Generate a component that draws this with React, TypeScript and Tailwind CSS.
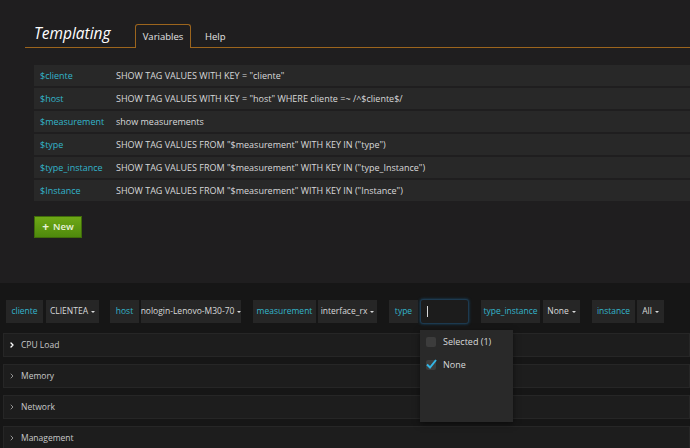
import { ChevronRight } from 'lucide-react';

const variables = [
  { name: '$cliente', query: 'SHOW TAG VALUES WITH KEY = "cliente"' },
  { name: '$host', query: 'SHOW TAG VALUES WITH KEY = "host" WHERE cliente =~ /^$cliente$/' },
  { name: '$measurement', query: 'show measurements' },
  { name: '$type', query: 'SHOW TAG VALUES FROM "$measurement" WITH KEY IN ("type")' },
  { name: '$type_instance', query: 'SHOW TAG VALUES FROM "$measurement" WITH KEY IN ("type_Instance")' },
  { name: '$Instance', query: 'SHOW TAG VALUES FROM "$measurement" WITH KEY IN ("Instance")' },
];

const rows = ['CPU Load', 'Memory', 'Network', 'Management'];

function Caret() {
  return <span className="ml-[3px] inline-block border-x-[2px] border-t-[2.5px] border-x-transparent border-t-[#d8d9da] align-middle" />;
}

function Label({ text, w }: { text: string; w: string }) {
  return (
    <div className={`${w} h-[23px] flex items-center justify-center bg-[#262626] text-[#33b5cb] whitespace-nowrap`}>{text}</div>
  );
}

function Value({ text, w }: { text: string; w: string }) {
  return (
    <div className={`${w} h-[23px] flex items-center justify-center bg-[#262626] text-[#d8d9da] whitespace-nowrap`}>
      {text}
      <Caret />
    </div>
  );
}

export default function App() {
  return (
    <div className="w-[690px] h-[448px] overflow-hidden bg-[#161616] text-[9px]" style={{ fontFamily: '"Open Sans", "Noto Sans", sans-serif' }}>
      <div className="h-[283px] bg-[#1f1e1f] pt-[25px]">
        <div className="ml-[25px] flex h-[23px] items-end border-b border-[#9c651d]">
          <div className="w-[110px] pl-[9px] self-center text-[15.5px] italic text-white leading-none -mt-[5px]">Templating</div>
          <div className="-mb-px h-[24px] w-[56px] flex items-center justify-center rounded-t-[3px] border-x border-t border-[#9c651d] bg-[#1f1e1f] pt-[2px] text-[9.5px] text-[#e4e4e4]">
            Variables
          </div>
          <div className="h-[22px] ml-[14px] flex items-center pt-[2px] text-[9.5px] text-[#e4e4e4]">Help</div>
        </div>

        <div className="ml-[34px] mt-[17px] flex flex-col gap-[2px]">
          {variables.map((v) => (
            <div key={v.name} className="flex h-[21px] items-center bg-[#282828]">
              <div className="w-[82px] pl-[6px] text-[9px] text-[#33b5cb]">{v.name}</div>
              <div className="text-[9px] text-[#d8d9da]">{v.query}</div>
            </div>
          ))}
        </div>

        <button className="ml-[34px] mt-[15px] flex h-[22px] w-[48px] items-center justify-center gap-[4px] border border-[#3f6b0a] bg-gradient-to-b from-[#6ea816] to-[#4e8a0c] text-[9.5px] font-semibold text-[#e8f2d8]">
          <span className="text-[12px] leading-none font-bold">+</span>
          <span>New</span>
        </button>
      </div>

      <div className="relative">
        <div className="flex pl-[6px] pt-[17px] text-[8.5px]">
          <div className="flex gap-[3px]">
            <Label text="cliente" w="w-[37px]" />
            <Value text="CLIENTEA" w="w-[53px]" />
          </div>
          <div className="ml-[11px] flex gap-[2px]">
            <Label text="host" w="w-[29px]" />
            <Value text="nologin-Lenovo-M30-70" w="w-[100px]" />
          </div>
          <div className="ml-[12px] flex gap-[2px]">
            <Label text="measurement" w="w-[63px]" />
            <Value text="interface_rx" w="w-[59px]" />
          </div>
          <div className="ml-[12px] flex gap-[2px]">
            <Label text="type" w="w-[29px]" />
            <div className="relative -my-px h-[25px] w-[49px] rounded-[3px] border border-[#1d3a50] bg-[#1c1c1c] shadow-[0_0_3px_#1a4a6a]">
              <span className="absolute left-[6px] top-[6px] h-[11px] w-px bg-[#d8d9da]" />
            </div>
          </div>
          <div className="ml-[12px] flex gap-[3px]">
            <Label text="type_instance" w="w-[59px]" />
            <Value text="None" w="w-[37px]" />
          </div>
          <div className="ml-[12px] flex gap-[2px]">
            <Label text="instance" w="w-[43px]" />
            <Value text="All" w="w-[27px]" />
          </div>
        </div>

        <div className="mt-[10px] flex flex-col gap-[7px] pl-[3px]">
          {rows.map((r, i) => (
            <div key={r} className="flex h-[24px] items-center border border-[#262626] bg-[#1d1d1d] pl-[4px] text-[8.5px] text-[#c8c9ca]">
              <ChevronRight className={i === 0 ? 'h-[8px] w-[8px] text-white' : 'h-[8px] w-[8px] text-[#aaa]'} strokeWidth={i === 0 ? 4 : 2.5} />
              <span className="ml-[5px]">{r}</span>
            </div>
          ))}
        </div>

        <div className="absolute left-[420px] top-[47px] h-[92px] w-[93px] bg-[#292929] shadow-[0_2px_6px_rgba(0,0,0,0.5)] pt-[3px]">
          <div className="flex h-[18px] items-center pl-[6px]">
            <span className="h-[10px] w-[10px] rounded-[2px] bg-[#3c3c3c]" />
            <span className="ml-[7px] text-[9px] text-[#d8d9da]">Selected (1)</span>
          </div>
          <div className="mt-[5px] flex h-[18px] items-center pl-[6px]">
            <span className="relative h-[10px] w-[10px] rounded-[2px] bg-[#3c3c3c]">
              <svg viewBox="0 0 12 12" className="absolute -left-px -top-[2px] h-[12px] w-[12px]">
                <path d="M2 6.5 L5 9.5 L11 2" fill="none" stroke="#33b5e5" strokeWidth="2" />
              </svg>
            </span>
            <span className="ml-[7px] text-[9px] text-[#d8d9da]">None</span>
          </div>
        </div>
      </div>
    </div>
  );
}
